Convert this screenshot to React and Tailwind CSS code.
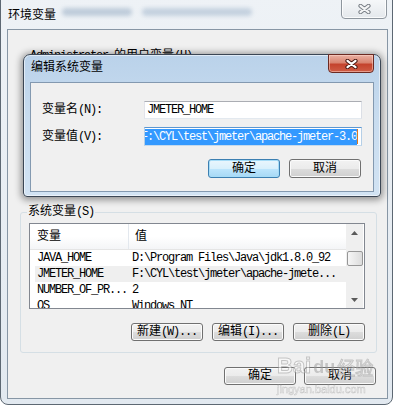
import React from 'react';

const ascii = /^[\x00-\x7f]+$/;

// SimSun-like: CJK at 12px, ASCII squeezed to 6px per char
function T({ s }) {
  return s
    .split(/([\x00-\x7f]+)/)
    .filter(Boolean)
    .map((p, i) =>
      ascii.test(p) ? (
        <span key={i} className="tracking-[-1.2px] whitespace-pre">{p}</span>
      ) : (
        <span key={i}>{p}</span>
      )
    );
}

function CloseX({ outline, fill }) {
  return (
    <svg width="13" height="10" viewBox="0 0 13 10">
      <path d="M2.5 1.8L10.5 8.2M10.5 1.8L2.5 8.2" stroke={outline} strokeWidth="4.2" strokeLinecap="round" />
      <path d="M2.5 1.8L10.5 8.2M10.5 1.8L2.5 8.2" stroke={fill} strokeWidth="2.2" strokeLinecap="round" />
    </svg>
  );
}

function Btn({ label, def, h = 'h-[18px]' }) {
  return (
    <div
      className={`w-[72px] ${h} rounded-[3px] border flex items-center justify-center ${
        def
          ? 'border-[#3c7fb1] bg-[linear-gradient(180deg,#eaf6fd_0%,#d9f0fc_50%,#bee6fd_50%,#a7d9f5_100%)] shadow-[inset_0_0_0_1px_#a6dcf7]'
          : 'border-[#707070] bg-[linear-gradient(180deg,#f2f2f2_0%,#ebebeb_50%,#dddddd_50%,#cfcfcf_100%)] shadow-[inset_0_0_0_1px_#fbfbfb]'
      }`}
    >
      <T s={label} />
    </div>
  );
}

function Arrow({ up }) {
  return (
    <svg width="7" height="4" viewBox="0 0 7 4">
      <path d={up ? 'M0 4L3.5 0L7 4Z' : 'M0 0L3.5 4L7 0Z'} fill="#5a5a5a" />
    </svg>
  );
}

const rows = [
  ['JAVA_HOME', 'D:\\Program Files\\Java\\jdk1.8.0_92'],
  ['JMETER_HOME', 'F:\\CYL\\test\\jmeter\\apache-jmete...'],
  ['NUMBER_OF_PR...', '2'],
  ['OS', 'Windows_NT'],
];

export default function App() {
  return (
    <div className="w-[394px] h-[406px] overflow-hidden bg-white relative font-['Liberation_Mono','Noto_Sans_CJK_SC',monospace] text-[12px] leading-[14px] text-black">
      {/* outer window: 环境变量 */}
      <div className="w-[393px] h-[413px] -mt-[8px] rounded-[8px] border border-[#5d6873] bg-[linear-gradient(180deg,#eef2f6,#e2e9f0)] flex flex-col">
        <div className="h-[36px] flex items-start">
          <span className="ml-[7px] mt-[16px]">环境变量</span>
          <div className="ml-[6px] mt-[15px] flex gap-[10px] blur-[2px] opacity-60">
            <div className="w-[70px] h-[8px] rounded bg-[#9fb3c8]" />
            <div className="w-[110px] h-[8px] rounded bg-[#a9bcd0]" />
          </div>
          <div className="ml-auto mr-[5px] w-[46px] h-[26px] rounded-b-[4px] border border-[#8e969e] bg-[linear-gradient(180deg,#fbfcfd,#e4e8ec)] shadow-[inset_0_0_0_1px_rgba(255,255,255,0.8)] flex items-end justify-center pb-[4px]">
            <CloseX outline="#7a8087" fill="#f4f5f6" />
          </div>
        </div>

        <div className="ml-[6px] w-[381px] h-[370px] border border-[#8796a5] bg-[#f0f0f0] flex flex-col">
          <div className="mt-[19px] ml-[22px]">
            <T s="Administrator 的用户变量(U)" />
          </div>

          {/* 系统变量 group */}
          <div className="mt-[149px] ml-[12px] w-[357px] h-[141px] border border-[#d5dfe5] rounded-[3px] relative flex flex-col">
            <span className="absolute left-[6px] -top-[8px] px-[1px] bg-[#f0f0f0]">
              <T s="系统变量(S)" />
            </span>

            <div className="mt-[10px] ml-[8px] w-[336px] h-[86px] border border-[#828790] bg-white flex overflow-hidden">
              <div className="w-[316px] flex flex-col">
                <div className="h-[26px] shrink-0 flex border-b border-[#e5e5e5] bg-[linear-gradient(180deg,#ffffff_0%,#ffffff_50%,#f4f5f7_100%)]">
                  <div className="w-[99px] pl-[7px] flex items-center border-r border-[#e3e8ee]">变量</div>
                  <div className="pl-[6px] flex items-center">值</div>
                </div>
                {rows.map(([k, v], i) => (
                  <div
                    key={k}
                    className={`ml-[5px] h-[16px] shrink-0 flex items-center ${i === 1 ? 'bg-[#efefef]' : ''}`}
                  >
                    <div className="w-[94px] pl-[2px]">
                      <T s={k} />
                    </div>
                    <div className="pl-[3px]">
                      <T s={v} />
                    </div>
                  </div>
                ))}
              </div>
              <div className="w-[17px] bg-[#efefef] flex flex-col items-center">
                <div className="h-[17px] flex items-center justify-center">
                  <Arrow up />
                </div>
                <div className="mt-[10px] w-[16px] h-[15px] rounded-[2px] border border-[#979797] bg-[linear-gradient(90deg,#f6f6f6,#dcdcdc)]" />
                <div className="mt-auto h-[17px] flex items-center justify-center">
                  <Arrow />
                </div>
              </div>
            </div>

            <div className="mt-[14px] mr-[11px] flex justify-end gap-[9px]">
              <Btn label="新建(W)..." />
              <Btn label="编辑(I)..." />
              <Btn label="删除(L)" />
            </div>
          </div>

          <div className="mt-[14px] mr-[11px] flex justify-end gap-[8px]">
            <Btn label="确定" />
            <Btn label="取消" />
          </div>
        </div>
      </div>

      {/* inner dialog: 编辑系统变量 */}
      <div className="absolute left-[23px] top-[54px] w-[358px] h-[143px] rounded-t-[7px] rounded-b-[4px] border border-[#3b4654] bg-[linear-gradient(180deg,#bad2ea_0%,#c8dcef_45%,#d2e3f3_100%)] shadow-[inset_0_0_0_1px_rgba(255,255,255,0.55),0_1px_7px_2px_rgba(0,0,0,0.4)] flex flex-col">
        <div className="h-[27px] flex items-start">
          <span className="ml-[7px] mt-[6px]">编辑系统变量</span>
          <div className="ml-auto mr-[6px] -mt-[1px] w-[46px] h-[19px] rounded-b-[4px] border border-[#6b2a22] bg-[linear-gradient(180deg,#eab0a2_0%,#d98470_45%,#c4432d_55%,#cf5d46_100%)] shadow-[inset_0_0_0_1px_rgba(255,220,210,0.5)] flex items-center justify-center">
            <CloseX outline="#4a1a14" fill="#ffffff" />
          </div>
        </div>

        <div className="ml-[6px] w-[344px] h-[110px] border border-[#8399b0] bg-[#f0f0f0] flex flex-col">
          <div className="mt-[18px] h-[18px] flex items-center">
            <div className="ml-[11px] w-[102px]">
              <T s="变量名(N):" />
            </div>
            <div className="w-[218px] h-[18px] border border-[#abadb3] border-b-[#e3e9ef] border-l-[#e2e3ea] border-r-[#dbdfe6] bg-white flex items-center pl-[2px]">
              <T s="JMETER_HOME" />
            </div>
          </div>

          <div className="mt-[8px] h-[19px] flex items-center">
            <div className="ml-[11px] w-[102px]">
              <T s="变量值(V):" />
            </div>
            <div className="w-[218px] h-[19px] border border-[#5c97d1] border-b-[#c5daed] border-l-[#b5cfe7] border-r-[#b5cfe7] bg-white flex items-center justify-end overflow-hidden pr-[3px]">
              <span className="bg-[#3399ff] text-white whitespace-nowrap h-[16px] flex items-center">
                <T s={'F:\\CYL\\test\\jmeter\\apache-jmeter-3.0'} />
              </span>
              <div className="w-[1px] h-[15px] bg-[#e07a20] shrink-0" />
            </div>
          </div>

          <div className="mt-[13px] mr-[12px] flex justify-end gap-[9px]">
            <Btn label="确定" def h="h-[19px]" />
            <Btn label="取消" h="h-[19px]" />
          </div>
        </div>
      </div>

      {/* watermark */}
      <div className="absolute left-[277px] top-[355px] flex items-end gap-[2px] opacity-50 pointer-events-none">
        <span className="font-['Liberation_Sans',sans-serif] text-[22px] leading-[22px] font-bold text-white [-webkit-text-stroke:1px_#9a9a9a]">Bai</span>
        <span className="font-['Liberation_Sans',sans-serif] text-[18px] leading-[20px] font-bold text-[#9a9a9a]">du</span>
        <span className="font-['Noto_Sans_CJK_SC',sans-serif] text-[18px] leading-[20px] text-white [-webkit-text-stroke:1px_#9a9a9a]">经验</span>
      </div>
      <div className="absolute left-[277px] top-[383px] font-['Liberation_Sans',sans-serif] text-[11px] leading-[12px] text-white [-webkit-text-stroke:0.5px_#aaaaaa] opacity-60 pointer-events-none">
        jingyan.baidu.com
      </div>
    </div>
  );
}
